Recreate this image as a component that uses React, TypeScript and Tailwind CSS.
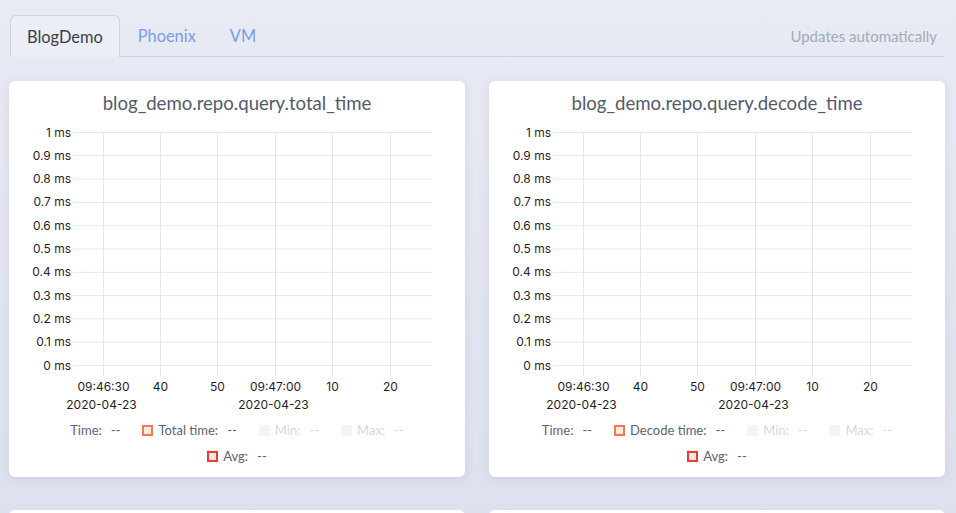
import React from "react";

const yLabels = ["1 ms", "0.9 ms", "0.8 ms", "0.7 ms", "0.6 ms", "0.5 ms", "0.4 ms", "0.3 ms", "0.2 ms", "0.1 ms", "0 ms"];
const vx = [94, 151, 208, 266, 323, 381];
const xTop = ["09:46:30", "40", "50", "09:47:00", "10", "20"];
const xBottom = ["2020-04-23", "", "", "2020-04-23", "", ""];

function Chart() {
  const top = 11;
  const step = 23.3;
  const bottom = top + step * 10;
  return (
    <svg width="456" height="300" className="block" style={{ fontFamily: "Inter, 'Liberation Sans', sans-serif" }}>
      {yLabels.map((_, i) => (
        <line key={"h" + i} x1={64} x2={423} y1={top + step * i + 0.5} y2={top + step * i + 0.5} stroke="#e6e6e6" strokeWidth={1} />
      ))}
      {vx.map((x) => (
        <line key={"v" + x} x1={x + 0.5} x2={x + 0.5} y1={top} y2={bottom + 11} stroke="#e6e6e6" strokeWidth={1} />
      ))}
      {yLabels.map((l, i) => (
        <text key={"t" + i} x={62} y={top + step * i + 4.5} textAnchor="end" fontSize="12" fill="#1f1f1f">
          {l}
        </text>
      ))}
      {vx.map((x, i) => (
        <g key={"x" + i}>
          <text x={x + 0.5} y={270} textAnchor="middle" fontSize="12" fill="#1f1f1f">{xTop[i]}</text>
          {xBottom[i] && (
            <text x={x - 1.5} y={288} textAnchor="middle" fontSize="12" fill="#1f1f1f">{xBottom[i]}</text>
          )}
        </g>
      ))}
    </svg>
  );
}

function Marker({ kind }: { kind: "orange" | "red" | "faint" }) {
  if (kind === "orange") return <span className="inline-block w-[11px] h-[11px] border-2 border-[#f07a4f] bg-[#fde9e1]" />;
  if (kind === "red") return <span className="inline-block w-[11px] h-[11px] border-2 border-[#ee3a2d] bg-[#e8e8e8]" />;
  return <span className="inline-block w-[11px] h-[11px] bg-[#f4f4f6]" />;
}

function Item({ label, marker, faint }: { label: string; marker?: "orange" | "red" | "faint"; faint?: boolean }) {
  return (
    <div className={"flex items-center " + (faint ? "text-[#d6d8de]" : "text-[#5d6272]")}>
      {marker && <Marker kind={marker} />}
      <span className={marker ? "ml-[5px]" : ""}>{label}</span>
      <span className="ml-[9px]">--</span>
    </div>
  );
}

function Card({ title, series }: { title: string; series: string }) {
  return (
    <div className="bg-white rounded-[6px] shadow-[0_2px_10px_rgba(120,130,170,0.18)] h-[396px] flex flex-col">
      <div className="pt-[10px] h-[40px] text-center text-[18.6px] leading-[24px] text-[#545a6c]">{title}</div>
      <Chart />
      <div className="flex justify-center items-center gap-[22px] text-[13px] leading-[18px] mt-[0px]">
        <Item label="Time:" />
        <Item label={series} marker="orange" />
        <Item label="Min:" marker="faint" faint />
        <Item label="Max:" marker="faint" faint />
      </div>
      <div className="flex justify-center items-center text-[13px] leading-[18px] mt-[8px]">
        <Item label="Avg:" marker="red" />
      </div>
    </div>
  );
}

export default function App() {
  return (
    <div
      className="h-[513px] overflow-hidden bg-gradient-to-b from-[#e8ebf4] to-[#dde1ee] pl-[9px] pr-[11px] pt-[16px]"
      style={{ fontFamily: "Lato, 'Noto Sans', sans-serif" }}
    >
      <div className="flex items-end border-b border-[#cfd3e0] ml-[1px] h-[41px]">
        <div className="h-[42px] -mb-px px-[16px] pt-[2px] flex items-center border border-b-0 border-[#cfd3e0] rounded-t-[6px] bg-[#eceef6] text-[16.4px] text-[#3d3a4c]">
          BlogDemo
        </div>
        <div className="h-[41px] px-[18px] pt-[2px] flex items-center text-[16.4px] text-[#7b9de0]">Phoenix</div>
        <div className="h-[41px] px-[16px] pt-[2px] flex items-center text-[16.4px] text-[#7b9de0]">VM</div>
        <div className="ml-auto h-[41px] pt-[2px] flex items-center pr-[8px] text-[15px] text-[#a5a9b8]">Updates automatically</div>
      </div>
      <div className="grid grid-cols-2 gap-x-[24px] gap-y-[33px] mt-[24px]">
        <Card title="blog_demo.repo.query.total_time" series="Total time:" />
        <Card title="blog_demo.repo.query.decode_time" series="Decode time:" />
        <div className="bg-white rounded-[6px] h-[396px]" />
        <div className="bg-white rounded-[6px] h-[396px]" />
      </div>
    </div>
  );
}
